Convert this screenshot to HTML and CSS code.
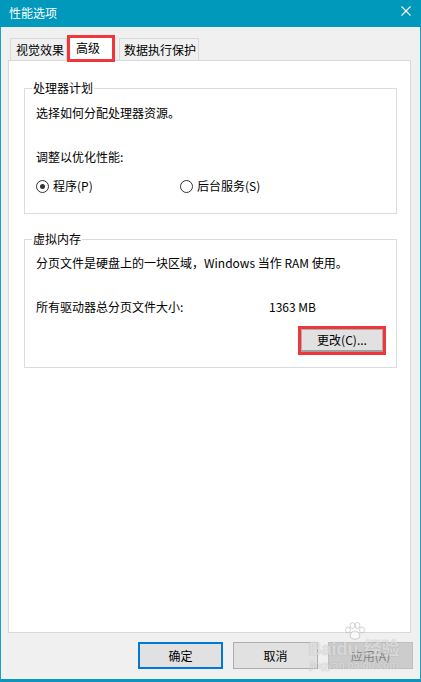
FILE: index.html
```html
<!DOCTYPE html>
<html lang="zh-CN">
<head>
<meta charset="utf-8">
<title>性能选项</title>
<link rel="stylesheet" href="styles.css">
</head>
<body>
<div class="window">
  <div class="titlebar">
    <span class="title">性能选项</span>
    <svg class="close" width="10" height="10" viewBox="0 0 10 10" aria-hidden="true">
      <path d="M0.5 0.5 L9.5 9.5 M9.5 0.5 L0.5 9.5" stroke="#fff" stroke-width="1.1" fill="none"/>
    </svg>
  </div>
  <div class="content">
    <div class="tabs">
      <div class="tab">视觉效果</div>
      <div class="tab active">高级</div>
      <div class="tab">数据执行保护</div>
    </div>
    <div class="panel">
      <div class="group">
        <div class="group-title">处理器计划</div>
        <div class="line first">选择如何分配处理器资源。</div>
        <div class="line gap">调整以优化性能:</div>
        <div class="radios">
          <label class="radio"><span class="dot checked"></span>程序(P)</label>
          <label class="radio"><span class="dot"></span>后台服务(S)</label>
        </div>
      </div>
      <div class="group vm">
        <div class="group-title">虚拟内存</div>
        <div class="line first">分页文件是硬盘上的一块区域，Windows 当作 RAM 使用。</div>
        <div class="line gap size"><span>所有驱动器总分页文件大小:</span><span>1363 MB</span></div>
        <div class="btn-row"><button class="btn marked">更改(C)...</button></div>
      </div>
    </div>
    <div class="footer">
      <button class="btn big default">确定</button>
      <button class="btn big">取消</button>
      <button class="btn big disabled">应用(A)</button>
      <div class="watermark">
        <svg class="wm-paw" width="22" height="18" viewBox="0 0 22 18" aria-hidden="true">
          <g fill="rgba(255,255,255,0.6)" stroke="rgba(130,130,130,0.45)" stroke-width="0.8">
            <ellipse cx="4" cy="8" rx="2.4" ry="3"/>
            <ellipse cx="8.5" cy="3.5" rx="2.4" ry="3"/>
            <ellipse cx="13.5" cy="3.5" rx="2.4" ry="3"/>
            <ellipse cx="18" cy="8" rx="2.4" ry="3"/>
            <path d="M11 9 C7 9 5 14 7 16 C9 17.5 13 17.5 15 16 C17 14 15 9 11 9 Z"/>
          </g>
        </svg>
        <span class="wm-brand">Baidu 经验</span>
        <span class="wm-url">jingyan.baidu.com</span>
      </div>
    </div>
  </div>
</div>
</body>
</html>
```
FILE: styles.css
```css
* { box-sizing: border-box; }

html, body {
  margin: 0;
  padding: 0;
  background: #f0f0f0;
}

body {
  font-family: "Noto Sans CJK SC", "Noto Sans", sans-serif;
  font-size: 12px;
  line-height: 16px;
  color: #000;
}

.window {
  width: 421px;
  height: 682px;
  display: flex;
  flex-direction: column;
  background: #f0f0f0;
  border-left: 1px solid #17a2c8;
  border-right: 1px solid #17a2c8;
  border-bottom: 3px solid #0b97bd;
}

.titlebar {
  height: 27px;
  flex: none;
  background: #0099bc;
  margin: 0 -1px;
  padding: 0 10px 0 9px;
  display: flex;
  align-items: center;
  justify-content: space-between;
  color: #fff;
}

.title { line-height: 16px; margin-top: -2px; }

.close { margin-top: -6px; }

.content {
  flex: 1;
  display: flex;
  flex-direction: column;
  padding: 8px 0 0 7px;
  position: relative;
}

/* tab strip */
.tabs {
  height: 25px;
  display: flex;
  align-items: flex-end;
  padding-left: 2px;
  position: relative;
  z-index: 1;
}

.tab {
  height: 22px;
  border: 1px solid #d9d9d9;
  border-bottom: none;
  background: #f0f0f0;
  padding: 3px 2px 0 5px;
  white-space: nowrap;
}

.tab.active {
  height: 27px;
  width: 48px;
  margin-bottom: -2px;
  background: #fff;
  border: 3px solid #f0353b;
  padding: 2px 0 0 6px;
}

.tab.active + .tab { margin-left: 4px; padding-left: 4px; }

.panel {
  height: 573px;
  margin-right: 9px;
  background: #fff;
  border: 1px solid #d9d9d9;
  padding: 27px 13px 0 15px;
}

/* group boxes */
.group {
  border: 1px solid #dcdcdc;
  padding: 0 11px 19px 11px;
}

.group-title {
  width: max-content;
  margin: -9px 0 0 -4px;
  padding: 0 1px;
  background: #fff;
}

.line.first { margin-top: 9px; }
.line.gap { margin-top: 28px; }

.radios {
  display: flex;
  margin-top: 13px;
}

.radio {
  display: flex;
  align-items: center;
  gap: 4px;
  width: 144px;
}

.dot {
  width: 13px;
  height: 13px;
  border: 1px solid #333;
  border-radius: 50%;
  display: flex;
  align-items: center;
  justify-content: center;
  background: #fff;
}

.dot.checked::after {
  content: "";
  width: 5px;
  height: 5px;
  border-radius: 50%;
  background: #333;
}

.group.vm {
  margin-top: 25px;
  padding-bottom: 15px;
}

.vm .line.first { margin-top: 8px; }

.size {
  display: grid;
  grid-template-columns: 233px auto;
}

.btn-row {
  display: flex;
  justify-content: flex-end;
  margin-top: 14px;
  padding-right: 2px;
}

/* buttons */
.btn {
  font-family: inherit;
  font-size: 12px;
  line-height: 16px;
  color: #000;
  background: #e1e1e1;
  border: 1px solid #adadad;
  padding: 0;
  margin: 0;
  height: 23px;
  width: 82px;
}

.btn.marked {
  border-bottom: 2px solid #9e9e9e;
  outline: 3px solid #f0353b;
}

.footer {
  display: flex;
  justify-content: flex-end;
  gap: 10px;
  margin-top: 9px;
  padding-right: 7px;
  position: relative;
}

.btn.big {
  width: 85px;
  height: 27px;
  padding-top: 1px;
}

.btn.default { border: 2px solid #0078d7; }

.btn.disabled {
  background: #cccccc;
  border-color: #bfbfbf;
  color: #838383;
}

/* semi-transparent watermark lying over the buttons */
.watermark {
  position: absolute;
  left: 298px;
  top: -20px;
  width: 96px;
  height: 50px;
  display: flex;
  flex-direction: column;
  align-items: center;
  color: rgba(255, 255, 255, 0.6);
  text-shadow: 0 0 1px rgba(110, 110, 110, 0.5);
  pointer-events: none;
}

.wm-paw { flex: none; margin-left: 2px; }

.wm-brand {
  display: block;
  height: 18px;
  overflow: visible;
  font-family: "Liberation Sans", "Noto Sans CJK SC", sans-serif;
  font-size: 18px;
  line-height: 18px;
  font-weight: bold;
  white-space: nowrap;
}

.wm-url {
  display: block;
  height: 12px;
  font-family: "Liberation Sans", sans-serif;
  font-size: 11px;
  line-height: 12px;
  margin-top: 1px;
  white-space: nowrap;
}
```
